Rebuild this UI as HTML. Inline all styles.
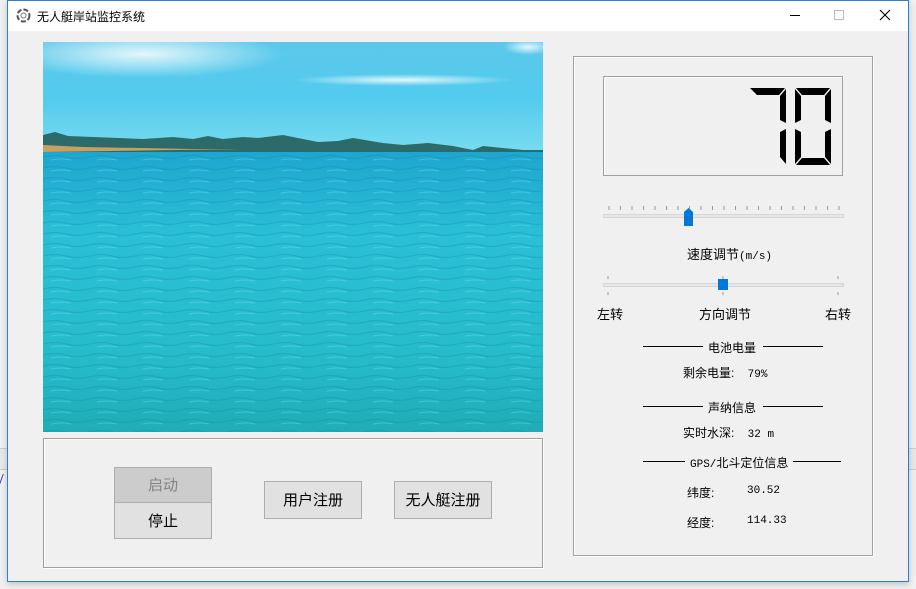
<!DOCTYPE html>
<html><head><meta charset="utf-8"><style>
*{margin:0;padding:0;box-sizing:border-box}
body{width:916px;height:589px;background:#f0f0f0;position:relative;overflow:hidden;font-family:"Liberation Sans","Noto Sans CJK SC",sans-serif;font-size:12px;color:#000}
.a{position:absolute}
.win{left:7px;top:0;width:902px;height:582px;border:1px solid #2b7fd6;background:#f0f0f0;box-shadow:0 2px 6px rgba(0,0,0,.2)}
.title{left:8px;top:1px;width:900px;height:30px;background:#fff}
.btn{position:absolute;background:#e1e1e1;border:1px solid #adadad;font-size:15px;text-align:center}
.gb{position:absolute;border:1px solid #a0a0a0;box-shadow:inset 1px 1px 0 #fff,1px 1px 0 #fff}
.t{position:absolute;font-size:12px;white-space:nowrap}
.line{position:absolute;height:1px;background:#000}
.m{font-family:"Liberation Mono","Noto Sans CJK SC",monospace;font-size:11px}
</style></head><body>
<div class="a" style="left:0;top:448px;width:7px;height:22px;border-top:1px solid #ccc;border-bottom:1px solid #ccc;background:#e8e8e8"></div>
<div class="a" style="left:909px;top:448px;width:7px;height:22px;border-top:1px solid #ccc;border-bottom:1px solid #ccc;background:#e8e8e8"></div>
<div class="a" style="left:1px;top:474px;width:3px;height:10px;border-left:1px solid #33c;transform:skewX(-20deg)"></div>
<div class="a win"></div>
<div class="a title"></div>
<svg class="a" style="left:16px;top:8px" width="15" height="15" viewBox="0 0 15 15"><circle cx="7.5" cy="7.5" r="6" fill="none" stroke="#555" stroke-width="2" stroke-dasharray="5 2"/><circle cx="7.5" cy="7.5" r="2.5" fill="#fff" stroke="#777"/></svg>
<div class="t" style="left:37px;top:8px;font-size:12px">无人艇岸站监控系统</div>
<div class="a" style="left:790px;top:15px;width:10px;height:1px;background:#000"></div>
<div class="a" style="left:834px;top:10px;width:10px;height:10px;border:1px solid #bbb"></div>
<svg class="a" style="left:879px;top:9px" width="12" height="12"><path d="M1 1L11 11M11 1L1 11" stroke="#000" stroke-width="1.1"/></svg>

<svg class="a" style="left:43px;top:42px" width="500" height="390" viewBox="0 0 500 390">
<defs>
<linearGradient id="sky" x1="0" y1="0" x2="0" y2="1"><stop offset="0" stop-color="#5cc8ea"/><stop offset=".5" stop-color="#52cbee"/><stop offset="1" stop-color="#7adcf0"/></linearGradient>
<linearGradient id="sea" x1="0" y1="0" x2="0" y2="1"><stop offset="0" stop-color="#1fa6cf"/><stop offset=".3" stop-color="#2abfd6"/><stop offset=".7" stop-color="#27bccb"/><stop offset="1" stop-color="#1fadb7"/></linearGradient>
<pattern id="wv" width="46" height="11" patternUnits="userSpaceOnUse"><path d="M0 5Q12 2 23 5T46 5" stroke="#0e86a8" stroke-width="1.3" fill="none" opacity=".3"/><path d="M8 8Q18 6 28 8" stroke="#7de6f0" stroke-width="1" fill="none" opacity=".35"/></pattern>
<radialGradient id="cl"><stop offset="0" stop-color="#f4fcfd" stop-opacity=".9"/><stop offset="1" stop-color="#f4fcfd" stop-opacity="0"/></radialGradient>
</defs>
<rect width="500" height="112" fill="url(#sky)"/>
<ellipse cx="100" cy="12" rx="140" ry="24" fill="url(#cl)"/>
<ellipse cx="360" cy="38" rx="110" ry="6" fill="url(#cl)"/>
<ellipse cx="485" cy="5" rx="25" ry="8" fill="url(#cl)"/>
<path d="M0 93L12 90L25 94L100 97L130 95L150 97L165 94L180 97L200 95L215 96L240 93L260 97L275 100L295 99L310 96L340 101L360 103L385 101L410 104L430 108L440 104L460 106L480 108L500 108L500 112L0 112Z" fill="#2d6a6a"/>
<path d="M0 103L40 105L150 107L200 107L0 110Z" fill="#c9a060"/>
<rect y="110" width="500" height="280" fill="url(#sea)"/>
<rect y="112" width="500" height="278" fill="url(#wv)"/>
</svg>

<div class="gb" style="left:43px;top:438px;width:500px;height:130px"></div>
<div class="btn" style="left:114px;top:467px;width:98px;height:36px;background:#ccc;color:#838383;line-height:36px">启动</div>
<div class="btn" style="left:114px;top:502px;width:98px;height:37px;line-height:38px">停止</div>
<div class="btn" style="left:264px;top:481px;width:98px;height:38px;line-height:38px">用户注册</div>
<div class="btn" style="left:394px;top:481px;width:98px;height:38px;line-height:38px">无人艇注册</div>

<div class="gb" style="left:573px;top:56px;width:300px;height:500px"></div>
<div class="gb" style="left:603px;top:76px;width:240px;height:100px;box-shadow:inset 1px 1px 0 #fff"></div>
<svg class="a" style="left:748px;top:86px" width="90" height="82" viewBox="0 0 90 82">
<g fill="#000">
<polygon points="2,2 37,2 31,9 9,9"/>
<polygon points="38,3 38,37 32,34 32,10"/>
<polygon points="38,43 38,78 32,71 32,46"/>
<polygon points="48,2 82,2 76,9 54,9"/>
<polygon points="47,3 53,10 53,34 47,37"/>
<polygon points="83,3 83,37 77,34 77,10"/>
<polygon points="47,43 53,46 53,71 47,78"/>
<polygon points="83,43 83,78 77,71 77,46"/>
<polygon points="54,72 76,72 82,79 48,79"/>
</g></svg>

<svg class="a" style="left:600px;top:202px" width="250" height="30">
<g stroke="#999">
<path d="M9 4v4M20.5 4v4M32 4v4M43.5 4v4M55 4v4M66.5 4v4M78 4v4M89.5 4v4M101 4v4M112.5 4v4M124 4v4M135.5 4v4M147 4v4M158.5 4v4M170 4v4M181.5 4v4M193 4v4M204.5 4v4M216 4v4M227.5 4v4M239 4v4"/></g>
<rect x="3.5" y="12.5" width="240" height="3" fill="#e7e7e7" stroke="#d6d6d6"/>
<path d="M84 10L88.5 6L93 10V24H84Z" fill="#0078d7"/>
</svg>
<div class="t" style="left:687px;top:244px;font-size:13px">速度调节<span class="m">(m/s)</span></div>
<svg class="a" style="left:600px;top:272px" width="250" height="28">
<g stroke="#999"><path d="M8 4v3M123 4v3M238 4v3M8 20v3M123 20v3M238 20v3"/></g>
<rect x="3.5" y="11.5" width="240" height="3" fill="#e7e7e7" stroke="#d6d6d6"/>
<rect x="118" y="7" width="10" height="11" fill="#0078d7"/>
</svg>
<div class="t" style="left:597px;top:304px;font-size:13px">左转</div>
<div class="t" style="left:699px;top:304px;font-size:13px">方向调节</div>
<div class="t" style="left:825px;top:304px;font-size:13px">右转</div>

<div class="line" style="left:643px;top:346px;width:60px"></div>
<div class="line" style="left:763px;top:346px;width:60px"></div>
<div class="t" style="left:708px;top:339px">电池电量</div>
<div class="t" style="left:683px;top:364px">剩余电量: <span class="m" style="margin-left:10px">79%</span></div>

<div class="line" style="left:643px;top:406px;width:60px"></div>
<div class="line" style="left:763px;top:406px;width:60px"></div>
<div class="t" style="left:708px;top:399px">声纳信息</div>
<div class="t" style="left:683px;top:424px">实时水深: <span class="m" style="margin-left:10px">32 m</span></div>

<div class="line" style="left:643px;top:461px;width:42px"></div>
<div class="line" style="left:793px;top:461px;width:48px"></div>
<div class="t" style="left:690px;top:454px"><span class="m">GPS/</span>北斗定位信息</div>
<div class="t" style="left:687px;top:484px">纬度: <span class="m" style="position:absolute;left:60px;top:1px">30.52</span></div>
<div class="t" style="left:687px;top:514px">经度: <span class="m" style="position:absolute;left:60px;top:1px">114.33</span></div>
</body></html>
